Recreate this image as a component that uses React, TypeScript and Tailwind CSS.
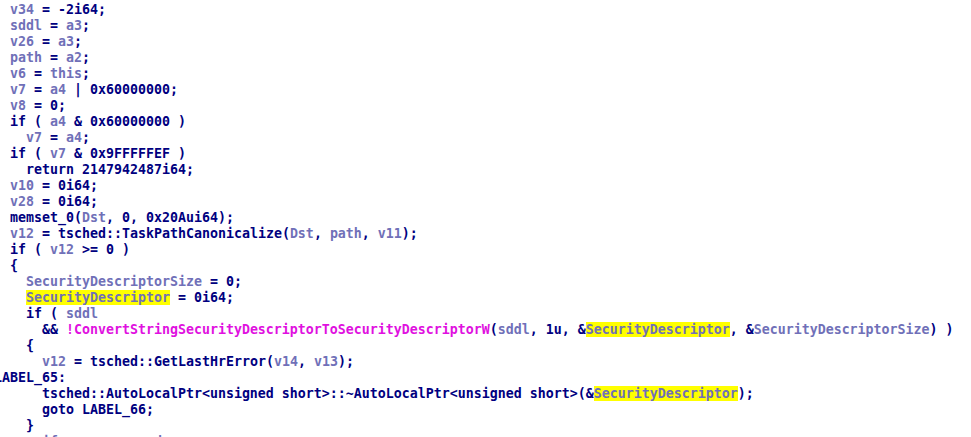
import React from "react";

type Seg = [string, "n" | "v" | "f" | "h"];

const N = (t: string): Seg => [t, "n"];
const V = (t: string): Seg => [t, "v"];
const F = (t: string): Seg => [t, "f"];
const H = (t: string): Seg => [t, "h"];

const lines: Seg[][] = [
  [N("  "), V("v34"), N(" = -2i64;")],
  [N("  "), V("sddl"), N(" = "), V("a3"), N(";")],
  [N("  "), V("v26"), N(" = "), V("a3"), N(";")],
  [N("  "), V("path"), N(" = "), V("a2"), N(";")],
  [N("  "), V("v6"), N(" = "), V("this"), N(";")],
  [N("  "), V("v7"), N(" = "), V("a4"), N(" | 0x60000000;")],
  [N("  "), V("v8"), N(" = 0;")],
  [N("  if ( "), V("a4"), N(" & 0x60000000 )")],
  [N("    "), V("v7"), N(" = "), V("a4"), N(";")],
  [N("  if ( "), V("v7"), N(" & 0x9FFFFFEF )")],
  [N("    return 2147942487i64;")],
  [N("  "), V("v10"), N(" = 0i64;")],
  [N("  "), V("v28"), N(" = 0i64;")],
  [N("  memset_0("), V("Dst"), N(", 0, 0x20Aui64);")],
  [N("  "), V("v12"), N(" = tsched::TaskPathCanonicalize("), V("Dst"), N(", "), V("path"), N(", "), V("v11"), N(");")],
  [N("  if ( "), V("v12"), N(" >= 0 )")],
  [N("  {")],
  [N("    "), V("SecurityDescriptorSize"), N(" = 0;")],
  [N("    "), H("SecurityDescriptor"), N(" = 0i64;")],
  [N("    if ( "), V("sddl")],
  [
    N("      && "),
    F("!ConvertStringSecurityDescriptorToSecurityDescriptorW"),
    N("("),
    V("sddl"),
    N(", 1u, &"),
    H("SecurityDescriptor"),
    N(", &"),
    V("SecurityDescriptorSize"),
    N(") )"),
  ],
  [N("    {")],
  [N("      "), V("v12"), N(" = tsched::GetLastHrError("), V("v14"), N(", "), V("v13"), N(");")],
  [N("LABEL_65:")],
  [N("      tsched::AutoLocalPtr<unsigned short>::~AutoLocalPtr<unsigned short>(&"), H("SecurityDescriptor"), N(");")],
  [N("      goto LABEL_66;")],
  [N("    }")],
  [N("      "), V("if"), N("            "), V("d")],
];

const cls: Record<Seg[1], string> = {
  n: "text-[#000080]",
  v: "text-[#7070b8]",
  f: "text-[#e010e0]",
  h: "text-[#7070b8] bg-[#ffff00]",
};

export default function App() {
  return (
    <div className="w-[971px] h-[437px] overflow-hidden bg-white">
      <div
        className="-ml-[6px] pt-[2px] font-bold text-[13.29px] leading-4"
        style={{ fontFamily: '"DejaVu Sans Mono", "Liberation Mono", monospace' }}
      >
        {lines.map((segs, i) => (
          <div key={i} className="whitespace-pre">
            {segs.map(([t, c], j) => (
              <span key={j} className={cls[c]}>
                {t}
              </span>
            ))}
          </div>
        ))}
      </div>
    </div>
  );
}
